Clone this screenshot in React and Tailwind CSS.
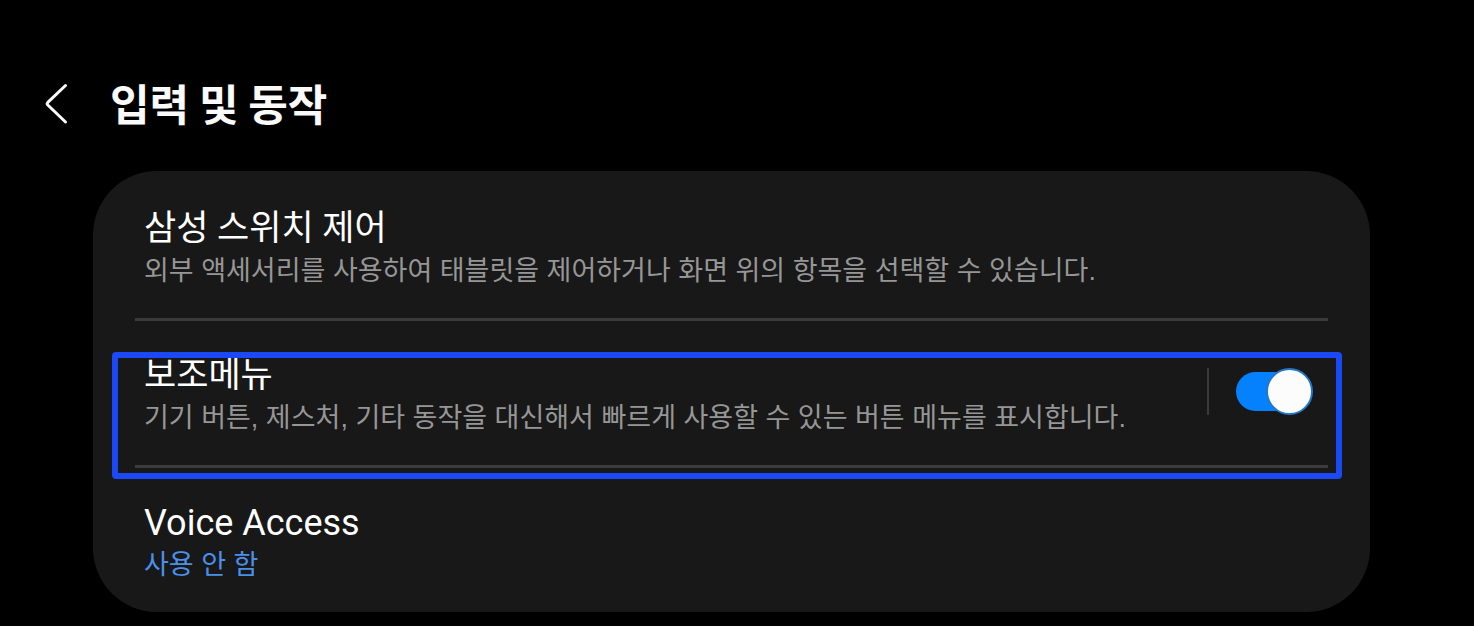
import { useState } from 'react';

const titleSizes = {
  ko: 'text-[35px]',
  en: 'text-[36px]',
};

function Row({ title, lang = 'ko', description, accent = false, divided = false, highlighted = false, children }) {
  return (
    <li
      className={`relative flex min-h-[147px] items-center border-t-[3px] ${
        divided ? 'border-[#3b3b3b]' : 'border-transparent'
      }`}
    >
      <div className="min-w-0 flex-1 px-[9px] pt-[6px]">
        <h2 lang={lang} className={`leading-[44px] text-white ${titleSizes[lang]}`}>
          {title}
        </h2>
        <p
          className={`font-['Liberation_Sans','Noto_Sans_CJK_KR',sans-serif] text-[27px] leading-[40px] ${
            accent ? 'text-[#4c8fe8]' : 'text-[#969696]'
          }`}
        >
          {description}
        </p>
      </div>
      {children}
      {highlighted && (
        <div className="pointer-events-none absolute -right-[14px] -bottom-[14px] -left-[23px] top-[31px] rounded-[4px] border-[6px] border-[#1b49f5]" />
      )}
    </li>
  );
}

function Toggle({ label, checked, onChange }) {
  return (
    <input
      type="checkbox"
      role="switch"
      aria-label={label}
      checked={checked}
      onChange={(e) => onChange(e.target.checked)}
      className="relative h-[47px] w-[77px] shrink-0 cursor-pointer appearance-none before:absolute before:top-1 before:left-0 before:h-[39px] before:w-[74px] before:rounded-full before:bg-[#5a5a5a] after:absolute after:top-0 after:left-0 after:h-[47px] after:w-[47px] after:rounded-full after:border-2 after:border-[#5a5a5a] after:bg-[#fcfcfc] checked:before:bg-[#0581fe] checked:after:left-[30px] checked:after:border-[#2279c9]"
    />
  );
}

export default function App() {
  const [assistantMenu, setAssistantMenu] = useState(true);

  return (
    <main className="min-h-screen bg-black pt-[76px] pb-[14px] font-[Roboto,'Noto_Sans_CJK_KR',sans-serif]">
      <header className="flex h-14 items-center gap-[42px] pl-[44px]">
        <button type="button" aria-label="뒤로" className="cursor-pointer">
          <svg width="24" height="42" viewBox="0 0 24 42" fill="none" aria-hidden="true">
            <path
              d="M21.5 2.5 3.8 19.4q-1.2 1.3 0 2.6L21.5 39"
              stroke="#fafafa"
              strokeWidth="3"
              strokeLinecap="round"
              strokeLinejoin="round"
            />
          </svg>
        </button>
        <h1 className="pb-1 font-['Noto_Sans_CJK_KR',sans-serif] text-[43px] leading-[52px] font-bold text-[#fafafa]">
          입력 및 동작
        </h1>
      </header>

      <ul className="mt-[39px] mr-[104px] ml-[93px] rounded-[64px] bg-[#181818] px-[42px]">
        <Row title="삼성 스위치 제어" description="외부 액세서리를 사용하여 태블릿을 제어하거나 화면 위의 항목을 선택할 수 있습니다." />
        <Row
          title="보조메뉴"
          description="기기 버튼, 제스처, 기타 동작을 대신해서 빠르게 사용할 수 있는 버튼 메뉴를 표시합니다."
          divided
          highlighted
        >
          <div className="mr-[15px] mb-1 flex shrink-0 items-center gap-[27px]">
            <div className="h-[47px] w-[2px] bg-[#3b3b3b]" />
            <Toggle label="보조메뉴" checked={assistantMenu} onChange={setAssistantMenu} />
          </div>
        </Row>
        <Row title="Voice Access" lang="en" description="사용 안 함" accent divided />
      </ul>
    </main>
  );
}
